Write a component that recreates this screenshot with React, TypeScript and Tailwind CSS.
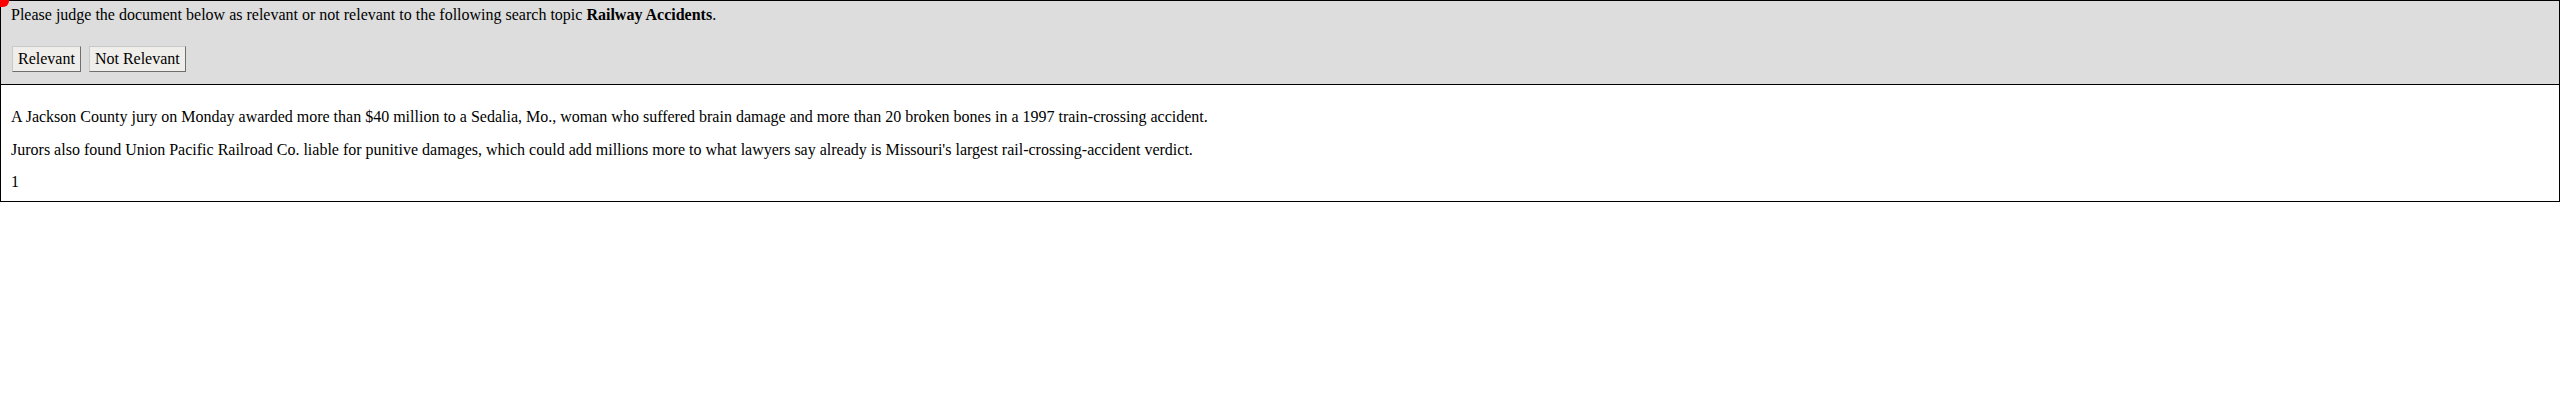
import React from "react";

export default function App() {
  const btn =
    "h-[26px] px-[5px] bg-[#f0eeea] border border-t-[#c9c9c9] border-l-[#c9c9c9] border-r-[#6e6e6e] border-b-[#6e6e6e] text-[16px] leading-[18px] text-black";
  return (
    <div
      className="relative w-full text-black text-[16px] leading-[18px]"
      style={{ fontFamily: '"Liberation Serif", "Times New Roman", serif' }}
    >
      <div className="absolute -top-[5px] -left-[5px] w-[14px] h-[12px] rounded-full bg-[#ff0000] z-10" />
      <div className="bg-[#dddddd] border border-black px-[10px] pt-[5px] pb-[12px]">
        <div>
          Please judge the document below as relevant or not relevant to the following search topic{" "}
          <b>Railway Accidents</b>.
        </div>
        <div className="mt-[22px] flex gap-[8px] pl-px">
          <button className={btn}>Relevant</button>
          <button className={btn}>Not Relevant</button>
        </div>
      </div>
      <div className="border-x border-b border-black px-[10px] pt-[23px] pb-[10px] flex flex-col gap-[14.5px]">
        <p>
          A Jackson County jury on Monday awarded more than $40 million to a Sedalia, Mo., woman who suffered brain
          damage and more than 20 broken bones in a 1997 train-crossing accident.
        </p>
        <p>
          Jurors also found Union Pacific Railroad Co. liable for punitive damages, which could add millions more to
          what lawyers say already is Missouri's largest rail-crossing-accident verdict.
        </p>
        <p>1</p>
      </div>
    </div>
  );
}
